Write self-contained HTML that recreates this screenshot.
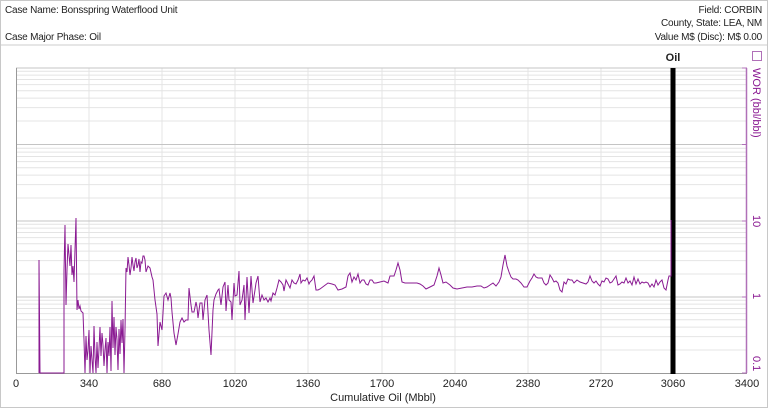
<!DOCTYPE html>
<html><head><meta charset="utf-8"><style>
body{margin:0;width:768px;height:408px;overflow:hidden;background:#fff;font-family:"Liberation Sans",sans-serif;}
.box{position:absolute;left:0;top:0;width:766px;height:406px;border:1px solid #c8c8c8;}
.t{position:absolute;font-size:10px;color:#222;white-space:nowrap;letter-spacing:-0.2px}
</style></head><body>
<div class="box"></div>
<div class="t" style="left:5px;top:5px">Case Name: Bonsspring Waterflood Unit</div>
<div class="t" style="left:5px;top:32px">Case Major Phase: Oil</div>
<div class="t" style="right:6px;top:5px">Field: CORBIN</div>
<div class="t" style="right:6px;top:18px">County, State: LEA, NM</div>
<div class="t" style="right:6px;top:32px">Value M$ (Disc): M$ 0.00</div>
<div style="position:absolute;left:1px;top:44px;width:766px;height:2px;background:#e6e6e6"></div>
<svg width="768" height="408" style="position:absolute;left:0;top:0" font-family="Liberation Sans, sans-serif">
<g stroke="#e4e4e4" stroke-width="1">
<line x1="16" x2="747" y1="350" y2="350"/><line x1="16" x2="747" y1="336.6" y2="336.6"/><line x1="16" x2="747" y1="327.1" y2="327.1"/><line x1="16" x2="747" y1="319.7" y2="319.7"/><line x1="16" x2="747" y1="313.6" y2="313.6"/><line x1="16" x2="747" y1="308.5" y2="308.5"/><line x1="16" x2="747" y1="304.1" y2="304.1"/><line x1="16" x2="747" y1="300.2" y2="300.2"/>
<line x1="16" x2="747" y1="274" y2="274"/><line x1="16" x2="747" y1="260.6" y2="260.6"/><line x1="16" x2="747" y1="251.1" y2="251.1"/><line x1="16" x2="747" y1="243.7" y2="243.7"/><line x1="16" x2="747" y1="237.6" y2="237.6"/><line x1="16" x2="747" y1="232.5" y2="232.5"/><line x1="16" x2="747" y1="228.1" y2="228.1"/><line x1="16" x2="747" y1="224.2" y2="224.2"/>
<line x1="16" x2="747" y1="198" y2="198"/><line x1="16" x2="747" y1="184.6" y2="184.6"/><line x1="16" x2="747" y1="175.1" y2="175.1"/><line x1="16" x2="747" y1="167.7" y2="167.7"/><line x1="16" x2="747" y1="161.6" y2="161.6"/><line x1="16" x2="747" y1="156.5" y2="156.5"/><line x1="16" x2="747" y1="152.1" y2="152.1"/><line x1="16" x2="747" y1="148.2" y2="148.2"/>
<line x1="16" x2="747" y1="121" y2="121"/><line x1="16" x2="747" y1="107.6" y2="107.6"/><line x1="16" x2="747" y1="98.1" y2="98.1"/><line x1="16" x2="747" y1="90.7" y2="90.7"/><line x1="16" x2="747" y1="84.6" y2="84.6"/><line x1="16" x2="747" y1="79.5" y2="79.5"/><line x1="16" x2="747" y1="75.1" y2="75.1"/><line x1="16" x2="747" y1="71.2" y2="71.2"/>
<line x1="89" x2="89" y1="68" y2="373"/><line x1="162" x2="162" y1="68" y2="373"/><line x1="235" x2="235" y1="68" y2="373"/><line x1="308" x2="308" y1="68" y2="373"/><line x1="382" x2="382" y1="68" y2="373"/><line x1="455" x2="455" y1="68" y2="373"/><line x1="528" x2="528" y1="68" y2="373"/><line x1="601" x2="601" y1="68" y2="373"/>
</g>
<g stroke="#c4c4c4"><line x1="16" x2="747" y1="68" y2="68"/><line x1="16" x2="747" y1="144.5" y2="144.5"/><line x1="16" x2="747" y1="221" y2="221"/><line x1="16" x2="747" y1="297" y2="297"/></g>
<line x1="16" x2="747" y1="373.5" y2="373.5" stroke="#999"/>
<line x1="16.5" x2="16.5" y1="68" y2="373" stroke="#999"/>
<line x1="746.5" x2="746.5" y1="68" y2="373" stroke="#b070b8" stroke-width="1.5"/>
<g stroke="#b070b8"><line x1="742" x2="747" y1="68" y2="68"/><line x1="742" x2="747" y1="144.5" y2="144.5"/><line x1="742" x2="747" y1="221" y2="221"/><line x1="742" x2="747" y1="297" y2="297"/><line x1="742" x2="747" y1="373" y2="373"/></g>
<rect x="670.5" y="68" width="5" height="306" fill="#000"/>
<polyline fill="none" stroke="#8a1a92" stroke-width="1" points="39,373 39,260 40,373 64,373 64,271 65,225 66,305 67,270 68,244 70,266 71,245 72,275 73,266 74,282 76,218 77,310 78,300 79,309 80,306 81,311 83,313 84,340 85,373 86,336 87,360 88,350 89,330 90,373 91,346 92,360 93,373 94,326 95,356 96,373 97,342 98,368 99,349 100,327 101,356 102,333 103,345 104,366 105,350 106,338 107,373 108,342 109,356 110,327 111,371 112,301 113,348 114,317 115,355 116,327 117,340 118,370 119,329 120,354 121,320 122,343 123,319 124,373 125,330 126,268 127,272 128,257 129,265 130,275 131,268 132,257 133,265 134,271 135,262 136,258 137,268 138,265 139,259 140,272 141,262 142,263 143,256 144,256 145,260 146,272 148,266 150,268 152,277 153,280 155,300 157,314 158,346 160,322 162,330 164,296 166,293 168,300 170,293 171,298 172,312 174,333 176,345 178,334 180,322 182,318 184,322 186,320 188,320 189,288 191,305 192,312 194,312 196,302 197,307 198,318 200,303 202,303 203,320 205,300 207,295 209,330 211,355 213,310 214,300 216,294 218,290 219,289 221,305 223,287 225,282 226,311 228,285 229,300 231,302 232,320 234,283 235,296 237,295 239,271 240,305 242,300 244,285 245,320 247,277 249,313 251,276 253,303 255,290 256,283 258,276 260,302 262,295 264,300 266,298 268,302 270,298 271,301 273,293 275,295 277,288 279,280 281,282 283,285 284,291 286,280 288,284 290,288 292,280 294,283 296,284 298,280 300,274 301,283 303,280 305,281 307,278 309,284 310,282 312,280 314,276 316,290 318,290 320,289 324,286 328,283 332,284 335,285 338,290 342,289 346,287 348,276 350,273 352,282 354,277 356,280 358,274 360,283 362,280 364,280 366,284 368,285 370,280 372,280 374,283 376,283 380,282 384,281 388,283 390,276 392,276 394,276 396,270 398,263 400,270 402,282 405,283 410,283 414,283 417,283 420,284 423,286 426,289 430,287 434,285 437,276 439,268 441,275 443,283 446,282 450,285 453,288 457,289 462,288 467,287 472,287 477,286 481,286 484,288 487,287 490,285 493,283 496,286 499,282 501,277 503,265 505,255 507,266 509,272 511,277 513,279 516,279 518,280 521,283 524,287 527,287 530,281 532,278 534,274 536,277 538,278 540,278 542,278 544,283 546,285 548,283 550,275 552,278 554,282 556,281 558,283 560,290 562,292 564,282 566,284 568,279 570,280 572,280 574,283 577,280 580,282 583,283 586,284 588,282 590,276 592,281 594,283 596,281 598,284 600,286 602,281 604,282 606,278 608,279 610,283 612,282 614,279 616,276 618,285 620,284 622,282 624,283 626,278 628,283 630,281 632,285 634,277 636,284 638,279 640,284 642,282 644,283 646,282 648,283 650,287 652,284 654,287 656,280 658,285 660,282 662,280 664,288 666,290 668,280 669,276 671,276 671,220"/>
<g font-size="11" fill="#222" text-anchor="middle">
<text x="16" y="387">0</text><text x="89" y="387">340</text><text x="162" y="387">680</text><text x="235" y="387">1020</text><text x="308" y="387">1360</text><text x="382" y="387">1700</text><text x="455" y="387">2040</text><text x="528" y="387">2380</text><text x="601" y="387">2720</text><text x="673" y="387">3060</text><text x="747" y="387">3400</text>
<text x="383" y="401">Cumulative Oil (Mbbl)</text>
<text x="673" y="61" font-size="11" font-weight="bold">Oil</text>
</g>
<rect x="752.5" y="51.5" width="9" height="9" fill="none" stroke="#b070b8" stroke-width="1"/>
<g fill="#8a1a92" font-size="11">
<text transform="translate(753,68) rotate(90)">WOR (bbl/bbl)</text>
<text transform="translate(753,215) rotate(90)">10</text>
<text transform="translate(753,293) rotate(90)">1</text>
<text transform="translate(753,356) rotate(90)">0.1</text>
</g>
</svg>
</body></html>
